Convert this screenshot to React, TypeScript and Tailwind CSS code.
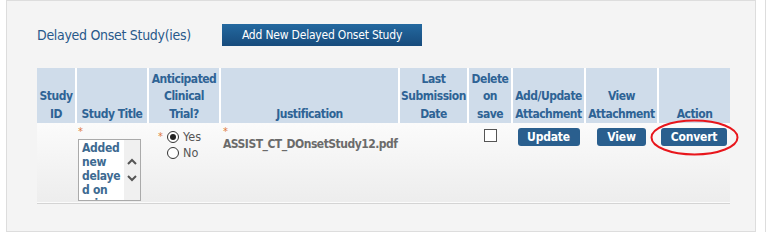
import React from "react";

const font = { fontFamily: "'DejaVu Sans Condensed', 'DejaVu Sans', sans-serif" };

const headers: { label: string[]; w: string }[] = [
  { label: ["Study", "ID"], w: "w-[39px]" },
  { label: ["Study Title"], w: "w-[72px]" },
  { label: ["Anticipated", "Clinical", "Trial?"], w: "w-[72px]" },
  { label: ["Justification"], w: "w-[179px]" },
  { label: ["Last", "Submission", "Date"], w: "w-[69px]" },
  { label: ["Delete", "on", "save"], w: "w-[44px]" },
  { label: ["Add/Update", "Attachment"], w: "w-[73px]" },
  { label: ["View", "Attachment"], w: "w-[73px]" },
  { label: ["Action"], w: "w-[72px]" },
];

function Star() {
  return <div className="h-[10px] text-[#e07b39] text-[11px] leading-[12px]">*</div>;
}

function SmallButton({ label, w }: { label: string; w: string }) {
  return (
    <button
      type="button"
      className={`${w} h-[18px] rounded-[3px] bg-[#2a5f8e] text-white text-[12px] font-bold leading-[18px] tracking-[-0.2px]`}
    >
      {label}
    </button>
  );
}

export default function App() {
  return (
    <div className="w-[766px] h-[232px] bg-white border-r border-[#dddddd]" style={font}>
      <div className="ml-[6px] w-[750px] h-[232px] border border-[#dddddd] bg-[#f4f4f4] pl-[30px] pt-[23px]">
        <div className="flex items-center h-[22px]">
          <span className="w-[185px] text-[14px] tracking-[-0.3px] text-[#28598a]">Delayed Onset Study(ies)</span>
          <button
            type="button"
            className="w-[200px] h-[22px] bg-gradient-to-b from-[#2469a0] to-[#174b7c] text-white text-[12px] tracking-[-0.2px]"
          >
            Add New Delayed Onset Study
          </button>
        </div>
        <table className="mt-[22px] w-[693px] table-fixed border-collapse text-[12px]">
          <thead>
            <tr className="h-[55px] bg-[#cfdcea] text-[#2e6395]">
              {headers.map((h, i) => (
                <th
                  key={i}
                  className={`${h.w} align-bottom pb-0 px-0 leading-[17.5px] tracking-[-0.5px] border-l-2 border-white first:border-l-0 font-bold whitespace-nowrap`}
                >
                  {h.label.map((l) => (
                    <div key={l}>{l}</div>
                  ))}
                </th>
              ))}
            </tr>
          </thead>
          <tbody>
            <tr className="h-[80px] bg-gradient-to-b from-[#fbfbfb] to-[#ededed] border-b border-[#d4d4d4] align-top">
              <td></td>
              <td className="pl-[2px] pt-[3px]">
                <Star />
                <div className="mt-[3px] w-[63px] h-[62px] border border-[#aaaaaa] bg-white flex overflow-hidden">
                  <div className="w-[45px] pl-[3px] pt-[1px] text-[12px] leading-[14px] font-bold tracking-[-0.3px] text-[#3d6a91] whitespace-nowrap">
                    <div>Added</div>
                    <div>new</div>
                    <div>delaye</div>
                    <div>d on</div>
                    <div>prior</div>
                  </div>
                  <div className="flex-1 bg-[#f0f0f0] flex flex-col items-center justify-center gap-[10px]">
                    <svg width="10" height="7" viewBox="0 0 10 7">
                      <path d="M1 6 L5 2 L9 6" stroke="#555" strokeWidth="2" fill="none" />
                    </svg>
                    <svg width="10" height="7" viewBox="0 0 10 7">
                      <path d="M1 1 L5 5 L9 1" stroke="#555" strokeWidth="2" fill="none" />
                    </svg>
                  </div>
                </div>
              </td>
              <td className="pt-[6px] pl-[10px]">
                <div className="flex items-center">
                  <span className="w-[9px] text-[#e07b39] text-[11px] leading-[12px]">*</span>
                  <span className="w-[12px] h-[12px] rounded-full border border-[#333] bg-white flex items-center justify-center">
                    <span className="w-[6px] h-[6px] rounded-full bg-[#222]"></span>
                  </span>
                  <span className="ml-[4px] text-[#555] text-[12.5px] leading-[15px]">Yes</span>
                </div>
                <div className="flex items-center mt-[1px] pl-[9px]">
                  <span className="w-[12px] h-[12px] rounded-full border border-[#333] bg-white"></span>
                  <span className="ml-[4px] text-[#555] text-[12.5px] leading-[15px]">No</span>
                </div>
              </td>
              <td className="pl-[3px] pt-[3px]">
                <Star />
                <div className="mt-[1px] text-[12px] font-bold tracking-[-0.5px] text-[#6b6b6b] leading-[14px] whitespace-nowrap">
                  ASSIST_CT_DOnsetStudy12.pdf
                </div>
              </td>
              <td></td>
              <td className="pt-[6px]">
                <div className="mx-auto w-[13px] h-[13px] border border-[#555] bg-white"></div>
              </td>
              <td className="pt-[5px] text-center">
                <SmallButton label="Update" w="w-[62px]" />
              </td>
              <td className="pt-[5px] text-center">
                <SmallButton label="View" w="w-[49px]" />
              </td>
              <td className="pt-[5px] text-center">
                <div className="relative inline-block align-top">
                  <SmallButton label="Convert" w="w-[66px]" />
                  <svg className="absolute left-[-11px] top-[-9px]" width="89" height="37" viewBox="0 0 89 37">
                    <ellipse cx="44.5" cy="18.5" rx="43" ry="17" stroke="#e8161c" strokeWidth="2" fill="none" />
                  </svg>
                </div>
              </td>
            </tr>
          </tbody>
        </table>
      </div>
    </div>
  );
}
